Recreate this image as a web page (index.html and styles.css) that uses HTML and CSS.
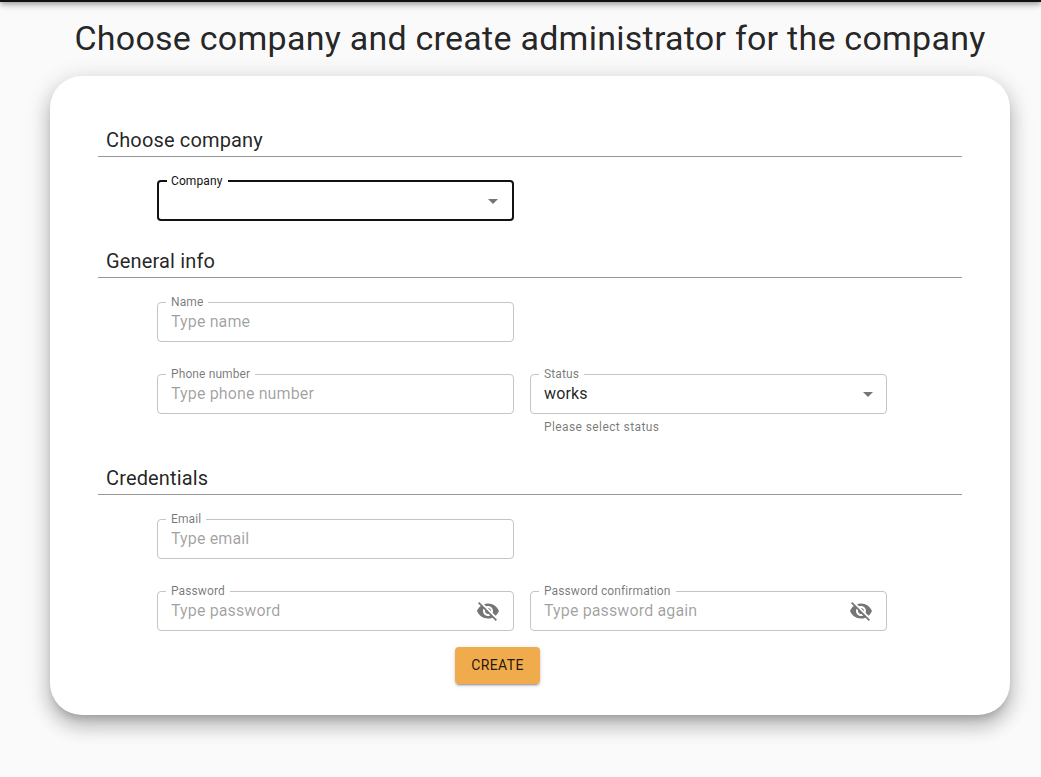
FILE: index.html
```html
<!DOCTYPE html>
<html lang="en">
<head>
<meta charset="utf-8">
<title>Create administrator</title>
<link rel="stylesheet" href="styles.css">
</head>
<body>
<div class="topbar"></div>
<h1 class="title">Choose company and create administrator for the company</h1>
<main class="card">
  <h2 class="section-title">Choose company</h2>
  <div class="grid company">
    <fieldset class="field focused"><legend>Company</legend><span class="value"></span><svg class="arrow" viewBox="0 0 24 24"><path d="M7 10l5 5 5-5z"/></svg></fieldset>
  </div>
  <h2 class="section-title">General info</h2>
  <div class="grid general">
    <fieldset class="field"><legend>Name</legend><span class="placeholder">Type name</span></fieldset>
    <fieldset class="field phone"><legend>Phone number</legend><span class="placeholder">Type phone number</span></fieldset>
    <div class="control">
      <fieldset class="field"><legend>Status</legend><span class="value">works</span><svg class="arrow" viewBox="0 0 24 24"><path d="M7 10l5 5 5-5z"/></svg></fieldset>
      <p class="helper">Please select status</p>
    </div>
  </div>
  <h2 class="section-title">Credentials</h2>
  <div class="grid credentials">
    <fieldset class="field"><legend>Email</legend><span class="placeholder">Type email</span></fieldset>
    <fieldset class="field phone"><legend>Password</legend><span class="placeholder">Type password</span><svg class="eye" viewBox="0 0 24 24"><path d="M12 7c2.76 0 5 2.24 5 5 0 .65-.13 1.26-.36 1.83l2.92 2.92c1.51-1.26 2.7-2.89 3.43-4.75-1.73-4.39-6-7.5-11-7.5-1.4 0-2.74.25-3.98.7l2.16 2.16C10.74 7.13 11.35 7 12 7zM2 4.27l2.28 2.28.46.46C3.08 8.3 1.78 10.02 1 12c1.73 4.39 6 7.5 11 7.5 1.55 0 3.03-.3 4.38-.84l.42.42L19.73 22 21 20.73 3.27 3 2 4.27zM7.53 9.8l1.55 1.55c-.05.21-.08.43-.08.65 0 1.66 1.34 3 3 3 .22 0 .44-.03.65-.08l1.55 1.55c-.67.33-1.41.53-2.2.53-2.76 0-5-2.24-5-5 0-.79.2-1.53.53-2.2zm4.31-.78l3.15 3.15.02-.16c0-1.66-1.34-3-3-3l-.17.01z"/></svg></fieldset>
    <fieldset class="field"><legend>Password confirmation</legend><span class="placeholder">Type password again</span><svg class="eye" viewBox="0 0 24 24"><path d="M12 7c2.76 0 5 2.24 5 5 0 .65-.13 1.26-.36 1.83l2.92 2.92c1.51-1.26 2.7-2.89 3.43-4.75-1.73-4.39-6-7.5-11-7.5-1.4 0-2.74.25-3.98.7l2.16 2.16C10.74 7.13 11.35 7 12 7zM2 4.27l2.28 2.28.46.46C3.08 8.3 1.78 10.02 1 12c1.73 4.39 6 7.5 11 7.5 1.55 0 3.03-.3 4.38-.84l.42.42L19.73 22 21 20.73 3.27 3 2 4.27zM7.53 9.8l1.55 1.55c-.05.21-.08.43-.08.65 0 1.66 1.34 3 3 3 .22 0 .44-.03.65-.08l1.55 1.55c-.67.33-1.41.53-2.2.53-2.76 0-5-2.24-5-5 0-.79.2-1.53.53-2.2zm4.31-.78l3.15 3.15.02-.16c0-1.66-1.34-3-3-3l-.17.01z"/></svg></fieldset>
  </div>
  <button class="create">CREATE</button>
</main>
</body>
</html>
```
FILE: styles.css
```css
* { box-sizing: border-box; }
body {
  display: flow-root;
  margin: 0;
  height: 777px;
  overflow: hidden;
  background: #fafafa;
  color: rgba(0, 0, 0, .87);
  font-family: Roboto, "Liberation Sans", sans-serif;
}
.topbar {
  height: 64px;
  margin-top: -62px;
  background: #121212;
  box-shadow: 0 2px 4px -1px rgba(0,0,0,.2), 0 4px 5px rgba(0,0,0,.14), 0 1px 10px rgba(0,0,0,.12);
}
.title {
  margin: 15px 0 0 19px;
  font-size: 34px;
  font-weight: 400;
  line-height: 42px;
  letter-spacing: .25px;
  text-align: center;
  white-space: nowrap;
}
.card {
  display: flex;
  flex-direction: column;
  width: 960px;
  height: 639px;
  margin: 17px 0 0 50px;
  padding: 48px;
  border-radius: 32px;
  background: #fff;
  box-shadow: 0 7px 8px -4px rgba(0,0,0,.2), 0 12px 17px 2px rgba(0,0,0,.14), 0 5px 22px 4px rgba(0,0,0,.12);
}
.section-title {
  flex: none;
  height: 33px;
  margin: 0;
  padding: 0 8px;
  border-bottom: 1px solid #979797;
  font-size: 20px;
  font-weight: 400;
  line-height: 32px;
  letter-spacing: .15px;
}
.grid {
  display: grid;
  flex: none;
  grid-template-columns: 357px 357px;
  grid-auto-rows: 72px;
  column-gap: 16px;
  padding: 17px 0 0 59px;
}
.company { height: 88px; }
.general { height: 184px; }
.credentials { height: 152px; }
.field {
  display: flex;
  width: 357px;
  height: 47px;
  min-width: 0;
  margin: 0;
  padding: 1px 13px 0;
  border: 1px solid #c4c4c4;
  border-radius: 4px;
}
.field legend {
  height: 14px;
  margin-left: -5px;
  padding: 0 5px;
  color: rgba(0,0,0,.54);
  font-size: 12px;
  line-height: 14px;
  letter-spacing: .11px;
}
.phone { grid-column-start: 1; }
.placeholder, .value {
  flex: 1;
  font-size: 16px;
  line-height: 24px;
  letter-spacing: .13px;
}
.placeholder { color: rgba(0,0,0,.38); }
.field.focused { border: 2px solid #121212; padding: 1px 12px 0; }
.field.focused legend {
  margin-left: -4px;
  padding-left: 4px;
  color: #121212;
}
.arrow {
  width: 24px;
  height: 24px;
  margin-right: -7px;
  fill: rgba(0,0,0,.54);
}
.focused .arrow { margin-right: -5px; }
.eye {
  width: 24px;
  height: 24px;
  fill: rgba(0,0,0,.54);
}
.helper {
  margin: 3px 14px 0;
  color: rgba(0,0,0,.54);
  font-size: 12px;
  line-height: 20px;
  letter-spacing: .4px;
}
.create {
  flex: none;
  width: 85px;
  height: 36.5px;
  margin-left: 357px;
  padding: 0 0 1px;
  border: 0;
  border-radius: 4px;
  background: #f0ab4c;
  color: rgba(0,0,0,.87);
  font: 400 14px/24px Roboto, "Liberation Sans", sans-serif;
  letter-spacing: .4px;
  box-shadow: 0 3px 1px -2px rgba(0,0,0,.2), 0 2px 2px rgba(0,0,0,.14), 0 1px 5px rgba(0,0,0,.12);
}
```
